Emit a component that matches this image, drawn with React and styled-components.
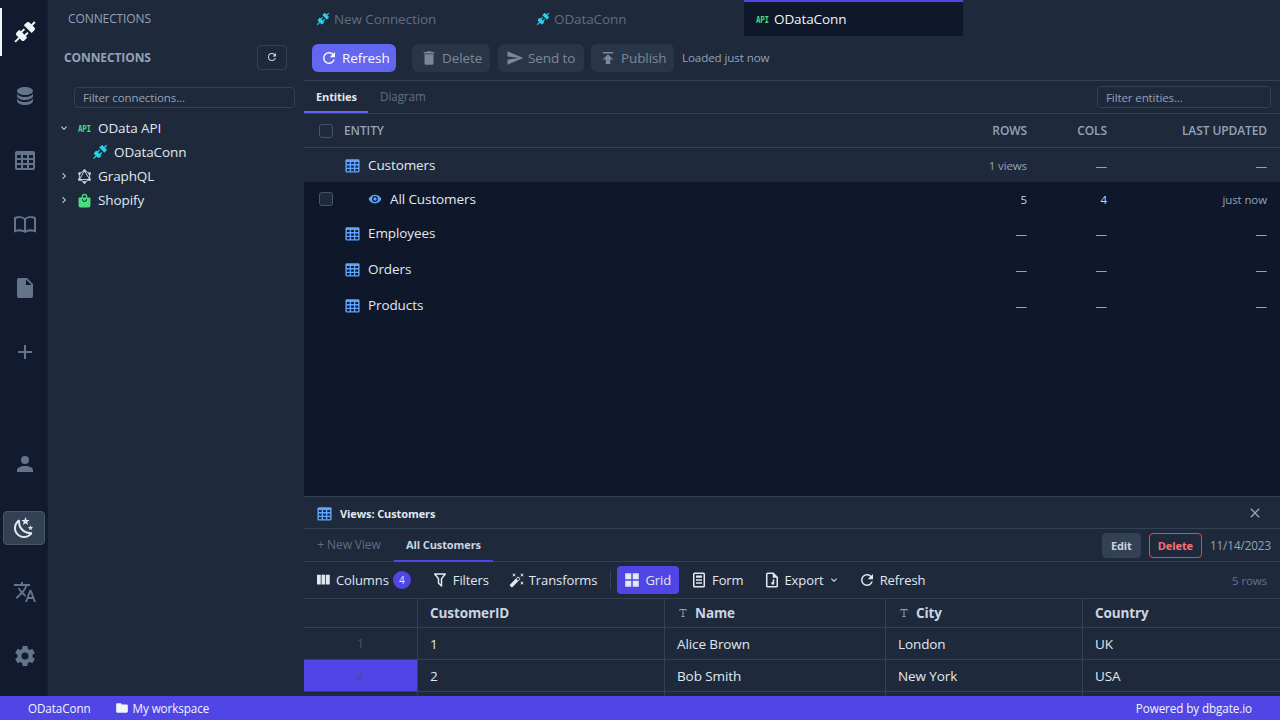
import React from "react";
import styled, { createGlobalStyle } from "styled-components";

const P = {
  plug: "M21.4 7.5C22.2 8.3 22.2 9.6 21.4 10.3L18.6 13.1L10.8 5.3L13.6 2.5C14.4 1.7 15.7 1.7 16.4 2.5L18.2 4.3L21.2 1.3L22.6 2.7L19.6 5.7L21.4 7.5M15.6 13.3L14.2 11.9L11.4 14.7L9.3 12.6L12.1 9.8L10.7 8.4L7.9 11.2L6.4 9.8L3.6 12.6C2.8 13.4 2.8 14.7 3.6 15.4L5.4 17.2L1.4 21.2L2.8 22.6L6.8 18.6L8.6 20.4C9.4 21.2 10.7 21.2 11.4 20.4L14.2 17.6L12.8 16.2L15.6 13.3Z",
  database: "M12,3C7.58,3 4,4.79 4,7C4,9.21 7.58,11 12,11C16.42,11 20,9.21 20,7C20,4.79 16.42,3 12,3M4,9V12C4,14.21 7.58,16 12,16C16.42,16 20,14.21 20,12V9C20,11.21 16.42,13 12,13C7.58,13 4,11.21 4,9M4,14V17C4,19.21 7.58,21 12,21C16.42,21 20,19.21 20,17V14C20,16.21 16.42,18 12,18C7.58,18 4,16.21 4,14Z",
  table: "M4,3H20A2,2 0 0,1 22,5V20A2,2 0 0,1 20,22H4A2,2 0 0,1 2,20V5A2,2 0 0,1 4,3M4,7V10H8V7H4M10,7V10H14V7H10M20,10V7H16V10H20M4,12V15H8V12H4M4,20H8V17H4V20M10,12V15H14V12H10M10,20H14V17H10V20M20,20V17H16V20H20M20,12H16V15H20V12Z",
  book: "M1,5.5C3,4.2 9,3.6 12,6C15,3.6 21,4.2 23,5.5V20.5C21,19.2 15,18.8 12,21C9,18.8 3,19.2 1,20.5V5.5M3,6.7V17.8C5.5,17 8.8,17 11,18.2V7.4C9,5.9 5.3,5.8 3,6.7M13,7.4V18.2C15.2,17 18.5,17 21,17.8V6.7C18.7,5.8 15,5.9 13,7.4Z",
  file: "M13,9V3.5L18.5,9M6,2C4.89,2 4,2.89 4,4V20A2,2 0 0,0 6,22H18A2,2 0 0,0 20,20V8L14,2H6Z",
  plus: "M19,13H13V19H11V13H5V11H11V5H13V11H19V13Z",
  account: "M12,4A4,4 0 0,1 16,8A4,4 0 0,1 12,12A4,4 0 0,1 8,8A4,4 0 0,1 12,4M12,14C16.42,14 20,15.79 20,18V20H4V18C4,15.79 7.58,14 12,14Z",
  night: "M17.75,4.09L15.22,6.03L16.13,9.09L13.5,7.28L10.87,9.09L11.78,6.03L9.25,4.09L12.44,4L13.5,1L14.56,4L17.75,4.09M21.25,11L19.61,12.25L20.2,14.23L18.5,13.06L16.8,14.23L17.39,12.25L15.75,11L17.81,10.95L18.5,9L19.19,10.95L21.25,11M18.97,15.95C19.8,15.87 20.69,17.05 20.16,17.8C19.84,18.25 19.5,18.67 19.08,19.07C15.17,23 8.84,23 4.94,19.07C1.03,15.17 1.03,8.83 4.94,4.93C5.34,4.53 5.76,4.17 6.21,3.85C6.96,3.32 8.14,4.21 8.06,5.04C7.79,7.9 8.75,10.87 10.95,13.06C13.14,15.26 16.1,16.22 18.97,15.95M17.33,17.97C14.5,17.81 11.7,16.64 9.53,14.5C7.36,12.31 6.2,9.5 6.04,6.68C3.23,9.82 3.34,14.64 6.35,17.66C9.37,20.67 14.19,20.78 17.33,17.97Z",
  translate: "M12.87,15.07L10.33,12.56L10.36,12.53C12.1,10.59 13.34,8.36 14.07,6H17V4H10V2H8V4H1V6H12.17C11.5,7.92 10.44,9.75 9,11.35C8.07,10.32 7.3,9.19 6.69,8H4.69C5.42,9.63 6.42,11.17 7.67,12.56L2.58,17.58L4,19L9,14L12.11,17.11L12.87,15.07M18.5,10H16.5L12,22H14L15.12,19H19.87L21,22H23L18.5,10M15.88,17L17.5,12.67L19.12,17H15.88Z",
  cog: "M12,15.5A3.5,3.5 0 0,1 8.5,12A3.5,3.5 0 0,1 12,8.5A3.5,3.5 0 0,1 15.5,12A3.5,3.5 0 0,1 12,15.5M19.43,12.97C19.47,12.65 19.5,12.33 19.5,12C19.5,11.67 19.47,11.34 19.43,11L21.54,9.37C21.73,9.22 21.78,8.95 21.66,8.73L19.66,5.27C19.54,5.05 19.27,4.96 19.05,5.05L16.56,6.05C16.04,5.66 15.5,5.32 14.87,5.07L14.5,2.42C14.46,2.18 14.25,2 14,2H10C9.75,2 9.54,2.18 9.5,2.42L9.13,5.07C8.5,5.32 7.96,5.66 7.44,6.05L4.95,5.05C4.73,4.96 4.46,5.05 4.34,5.27L2.34,8.73C2.21,8.95 2.27,9.22 2.46,9.37L4.57,11C4.53,11.34 4.5,11.67 4.5,12C4.5,12.33 4.53,12.65 4.57,12.97L2.46,14.63C2.27,14.78 2.21,15.05 2.34,15.27L4.34,18.73C4.46,18.95 4.73,19.03 4.95,18.95L7.44,17.94C7.96,18.34 8.5,18.68 9.13,18.93L9.5,21.58C9.54,21.82 9.75,22 10,22H14C14.25,22 14.46,21.82 14.5,21.58L14.87,18.93C15.5,18.67 16.04,18.34 16.56,17.94L19.05,18.95C19.27,19.03 19.54,18.95 19.66,18.73L21.66,15.27C21.78,15.05 21.73,14.78 21.54,14.63L19.43,12.97Z",
  refresh: "M17.65,6.35C16.2,4.9 14.21,4 12,4A8,8 0 0,0 4,12A8,8 0 0,0 12,20C15.73,20 18.84,17.45 19.73,14H17.65C16.83,16.33 14.61,18 12,18A6,6 0 0,1 6,12A6,6 0 0,1 12,6C13.66,6 15.14,6.69 16.22,7.78L13,11H20V4L17.65,6.35Z",
  trash: "M19,4H15.5L14.5,3H9.5L8.5,4H5V6H19M6,19A2,2 0 0,0 8,21H16A2,2 0 0,0 18,19V7H6V19Z",
  send: "M2,21L23,12L2,3V10L17,12L2,14V21Z",
  publish: "M5,4V6H19V4H5M5,14H9V20H15V14H19L12,7L5,14Z",
  down: "M7.41,8.58L12,13.17L16.59,8.58L18,10L12,16L6,10L7.41,8.58Z",
  right: "M8.59,16.58L13.17,12L8.59,7.41L10,6L16,12L10,18L8.59,16.58Z",
  eye: "M12,9A3,3 0 0,0 9,12A3,3 0 0,0 12,15A3,3 0 0,0 15,12A3,3 0 0,0 12,9M12,17A5,5 0 0,1 7,12A5,5 0 0,1 12,7A5,5 0 0,1 17,12A5,5 0 0,1 12,17M12,4.5C7,4.5 2.73,7.61 1,12C2.73,16.39 7,19.5 12,19.5C17,19.5 21.27,16.39 23,12C21.27,7.61 17,4.5 12,4.5Z",
  close: "M19,6.41L17.59,5L12,10.59L6.41,5L5,6.41L10.59,12L5,17.59L6.41,19L12,13.41L17.59,19L19,17.59L13.41,12L19,6.41Z",
  columns: "M16,5V18H21V5M4,18H9V5H4M10,18H15V5H10V18Z",
  filter: "M15,19.88C15.04,20.18 14.94,20.5 14.71,20.71C14.32,21.1 13.69,21.1 13.3,20.71L9.29,16.7C9.06,16.47 8.96,16.16 9,15.87V10.75L4.21,4.62C3.87,4.19 3.95,3.56 4.38,3.22C4.57,3.08 4.78,3 5,3V3H19V3C19.22,3 19.43,3.08 19.62,3.22C20.05,3.56 20.13,4.19 19.79,4.62L15,10.75V19.88M7.04,5L11,10.06V15.58L13,17.58V10.05L16.96,5H7.04Z",
  wand: "M7.5,5.6L5,7L6.4,4.5L5,2L7.5,3.4L10,2L8.6,4.5L10,7L7.5,5.6M19.5,15.4L22,14L20.6,16.5L22,19L19.5,17.6L17,19L18.4,16.5L17,14L19.5,15.4M22,2L20.6,4.5L22,7L19.5,5.6L17,7L18.4,4.5L17,2L19.5,3.4L22,2M13.34,12.78L15.78,10.34L13.66,8.22L11.22,10.66L13.34,12.78M14.37,7.29L16.71,9.63C17.1,10 17.1,10.65 16.71,11.04L5.04,22.71C4.65,23.1 4,23.1 3.63,22.71L1.29,20.37C0.9,20 0.9,19.35 1.29,18.96L12.96,7.29C13.35,6.9 14,6.9 14.37,7.29Z",
  grid: "M3,11H11V3H3M3,21H11V13H3M13,21H21V13H13M13,3V11H21V3",
  form: "M6,2H18A2,2 0 0,1 20,4V20A2,2 0 0,1 18,22H6A2,2 0 0,1 4,20V4A2,2 0 0,1 6,2M6,4V20H18V4H6M8,6H16V9H8V6M8,11H16V13H8V11M8,15H16V17H8V15Z",
  exportFile: "M6,2H14L20,8V20A2,2 0 0,1 18,22H6A2,2 0 0,1 4,20V4A2,2 0 0,1 6,2M6,4V20H18V9H13V4H6M15,11V16A2,2 0 1,1 13,14.3V11H15Z",
  bag: "M12,1A4.5,4.5 0 0,0 7.5,5.5V7H4A1.5,1.5 0 0,0 2.5,8.5V20A3,3 0 0,0 5.5,23H18.5A3,3 0 0,0 21.5,20V8.5A1.5,1.5 0 0,0 20,7H16.5V5.5A4.5,4.5 0 0,0 12,1M12,3A2.5,2.5 0 0,1 14.5,5.5V7H9.5V5.5A2.5,2.5 0 0,1 12,3M8,9.5H9.6V10.5C9.6,12 10.6,12.8 12,12.8C13.4,12.8 14.4,12 14.4,10.5V9.5H16V10.5C16,13 14,14.4 12,14.4C10,14.4 8,13 8,10.5V9.5Z",
  folder: "M10,4H4C2.89,4 2,4.89 2,6V18A2,2 0 0,0 4,20H20A2,2 0 0,0 22,18V8C22,6.89 21.1,6 20,6H12L10,4Z",
  typeT: "M5,4H19V8.5H17.6V6H13V18H15V20H9V18H11V6H6.4V8.5H5V4Z",
};

const GlobalStyle = createGlobalStyle`
  html, body {
    margin: 0;
    height: 100%;
    background: #0f172a;
    font-family: "Open Sans", "Liberation Sans", sans-serif;
  }
  * {
    box-sizing: border-box;
  }
`;

const Svg = styled.svg`
  display: block;
  flex: none;
  fill: ${(p) => p.$color || "currentColor"};
`;

const Icon = ({ d, size = 16, color }) => (
  <Svg viewBox="0 0 24 24" width={size} height={size} $color={color}>
    <path d={d} fillRule="evenodd" />
  </Svg>
);

const OutlineSvg = styled.svg`
  display: block;
  flex: none;
  fill: none;
  stroke: #cbd5e1;
  stroke-width: 1.5;
  stroke-linejoin: round;

  circle {
    fill: #cbd5e1;
    stroke: none;
  }
`;

const graphqlPoints = [
  [12, 2.5],
  [20.2, 7.2],
  [20.2, 16.8],
  [12, 21.5],
  [3.8, 16.8],
  [3.8, 7.2],
];

const GraphqlIcon = () => (
  <OutlineSvg viewBox="0 0 24 24" width={15} height={15}>
    <polygon points="12,2.5 20.2,7.2 20.2,16.8 12,21.5 3.8,16.8 3.8,7.2" />
    <polygon points="12,2.5 20.2,16.8 3.8,16.8" />
    {graphqlPoints.map(([cx, cy]) => (
      <circle key={`${cx}-${cy}`} cx={cx} cy={cy} r="2.2" />
    ))}
  </OutlineSvg>
);

const Page = styled.div`
  width: 1280px;
  height: 720px;
  display: flex;
  flex-direction: column;
  overflow: hidden;
  color: #e2e8f0;
  font-size: 13px;
  letter-spacing: -0.1px;
`;

const Workspace = styled.div`
  flex: 1;
  min-height: 0;
  display: flex;
`;

const IconBar = styled.nav`
  width: 48px;
  flex: none;
  display: flex;
  flex-direction: column;
  padding-bottom: 8px;
  background: #111a2e;
  color: #64748b;
  box-shadow: inset -3px 0 3px -2px #162033;
`;

const BarItem = styled.div`
  position: relative;
  width: 48px;
  height: 64px;
  flex: none;
  display: flex;
  align-items: center;
  justify-content: center;
  padding-left: 2px;
  color: ${(p) => (p.$active ? "#f1f5f9" : "#64748b")};

  &::before {
    content: "";
    display: ${(p) => (p.$active ? "block" : "none")};
    position: absolute;
    left: 0;
    top: 8px;
    width: 2px;
    height: 48px;
    background: #f1f5f9;
  }
`;

const ThemeSlot = styled(BarItem)`
  padding-left: 0;
`;

const ThemeButton = styled.div`
  width: 42px;
  height: 34px;
  display: flex;
  align-items: center;
  justify-content: center;
  border-radius: 4px;
  background: #334155;
  border: 1px solid #475569;
  color: #e2e8f0;
`;

const BarSpacer = styled.div`
  flex: 1;
`;

const Sidebar = styled.aside`
  width: 256px;
  flex: none;
  background: #1e293b;
  display: flex;
  flex-direction: column;
`;

const SideCaption = styled.div`
  height: 36px;
  padding: 0 20px;
  display: flex;
  align-items: center;
  font-size: 12px;
  color: #94a3b8;
`;

const SideHead = styled.div`
  height: 44px;
  padding: 0 17px 2px 16px;
  display: flex;
  align-items: center;
  justify-content: space-between;
  font-size: 12px;
  font-weight: 700;
  color: #94a3b8;
`;

const SquareButton = styled.div`
  width: 30px;
  height: 25px;
  border: 1px solid #334155;
  border-radius: 4px;
  display: flex;
  align-items: center;
  justify-content: center;
  color: #cbd5e1;
`;

const FilterInput = styled.div`
  height: ${(p) => p.$height}px;
  width: ${(p) => p.$width}px;
  border: 1px solid #334155;
  border-radius: 4px;
  display: flex;
  align-items: center;
  padding: 0 8px;
  font-size: 11.5px;
  color: #94a3b8;
  background: #1e293b;
`;

const SideFilter = styled.div`
  padding: 7px 9px 8px 26px;
`;

const TreeRow = styled.div`
  height: 24px;
  display: flex;
  align-items: center;
  padding-left: ${(p) => p.$indent}px;
  gap: ${(p) => p.$gap || 0}px;
  font-size: 13.5px;
  color: #e2e8f0;
`;

const Chevron = styled.span`
  width: 20px;
  display: flex;
  justify-content: flex-start;
  color: #cbd5e1;
`;

const ApiMark = styled.span`
  width: 13px;
  flex: none;
  margin-right: ${(p) => p.$mr || 0}px;
  display: inline-block;
  font-family: "DejaVu Sans Mono", "Liberation Mono", monospace;
  font-size: 7.5px;
  font-weight: 700;
  letter-spacing: -0.3px;
  transform: scaleY(1.3);
  color: #4ade80;
`;

const TreeIcon = styled.span`
  width: 13px;
  margin-right: 7px;
  flex: none;
  display: flex;
  justify-content: center;
`;

const Main = styled.main`
  flex: 1;
  min-width: 0;
  display: flex;
  flex-direction: column;
`;

const TabBar = styled.div`
  height: 36px;
  flex: none;
  display: flex;
  background: #1e293b;
`;

const DocTab = styled.div`
  width: ${(p) => p.$width}px;
  display: flex;
  align-items: center;
  gap: 4px;
  padding-left: 12px;
  font-size: 13.5px;
  color: ${(p) => (p.$active ? "#f1f5f9" : "#5f6e84")};
  background: ${(p) => (p.$active ? "#0f172a" : "transparent")};
  border-top: 2px solid ${(p) => (p.$active ? "#4f46e5" : "transparent")};
`;

const Toolbar = styled.div`
  height: 45px;
  flex: none;
  display: flex;
  align-items: center;
  padding: 0 8px 1px;
  background: #1e293b;
  border-bottom: 1px solid #334155;
`;

const ActionButton = styled.div`
  height: 28px;
  margin-right: ${(p) => p.$mr || 0}px;
  width: ${(p) => p.$width}px;
  padding-left: 8px;
  display: flex;
  align-items: center;
  gap: 4px;
  border-radius: 6px;
  font-size: 13.5px;
  background: ${(p) => (p.$primary ? "#6366f1" : "#2a3648")};
  color: ${(p) => (p.$primary ? "#f8fafc" : "#7a889c")};
`;

const Loaded = styled.span`
  margin-left: 8px;
  font-size: 11.6px;
  color: #94a3b8;
`;

const SubTabs = styled.div`
  height: 33px;
  flex: none;
  display: flex;
  align-items: stretch;
  background: #1e293b;
  border-bottom: 1px solid #334155;
  padding-right: 9px;
`;

const SubTab = styled.div`
  padding: 0 12px;
  width: ${(p) => p.$width}px;
  display: flex;
  align-items: center;
  font-size: ${(p) => (p.$active ? 11 : 11.7)}px;
  font-weight: ${(p) => (p.$active ? 700 : 400)};
  color: ${(p) => (p.$active ? "#e2e8f0" : "#5f6e84")};
  border-bottom: 2px solid ${(p) => (p.$active ? "#6366f1" : "transparent")};
`;

const SubTabFill = styled.div`
  flex: 1;
`;

const SubTabSide = styled.div`
  display: flex;
  align-items: center;
`;

const EntityPane = styled.section`
  flex: 1;
  min-height: 0;
  background: #0f172a;
`;

const EntityRow = styled.div`
  height: ${(p) => p.$height}px;
  display: grid;
  grid-template-columns: 40px 1fr 80px 80px 160px;
  padding-right: 13px;
  align-items: center;
  background: ${(p) => (p.$raised ? "#1e293b" : "transparent")};
  border-bottom: ${(p) => (p.$line ? "1px solid #334155" : "none")};
  font-size: 13.5px;
  color: #e2e8f0;
`;

const HeadCell = styled.div`
  font-size: 12px;
  font-weight: 600;
  color: #94a3b8;
  text-align: ${(p) => (p.$left ? "left" : "right")};
`;

const NumCell = styled.div`
  font-size: 11.5px;
  text-align: right;
  color: ${(p) => p.$color || "#94a3b8"};
`;

const CheckCell = styled.div`
  padding-left: 15px;
`;

const Check = styled.div`
  width: 14px;
  height: 14px;
  border: 1px solid #475569;
  border-radius: 3px;
  background: #1e293b;
`;

const NameCell = styled.div`
  display: flex;
  align-items: center;
  gap: ${(p) => p.$gap || 7}px;
  padding-left: ${(p) => p.$indent || 0}px;
`;

const ViewsPane = styled.section`
  height: 200px;
  flex: none;
  background: #1e293b;
  border-top: 1px solid #334155;
  display: flex;
  flex-direction: column;
`;

const ViewsHead = styled.div`
  height: 32px;
  flex: none;
  display: flex;
  align-items: center;
  gap: 7px;
  padding: 1px 17px 0 12px;
  border-bottom: 1px solid #334155;
  font-size: 11px;
  font-weight: 700;
  color: #e2e8f0;
`;

const Close = styled.span`
  margin-left: auto;
  color: #94a3b8;
`;

const ViewTabs = styled.div`
  height: 33px;
  flex: none;
  display: flex;
  align-items: stretch;
  padding: 0 9px 0 0;
  border-bottom: 1px solid #334155;
`;

const ViewTab = styled.div`
  display: flex;
  align-items: center;
  justify-content: center;
  width: ${(p) => p.$width}px;
  font-size: ${(p) => (p.$active ? 11 : 12)}px;
  font-weight: ${(p) => (p.$active ? 700 : 400)};
  color: ${(p) => (p.$active ? "#cbd5e1" : "#5f6e84")};
  border-bottom: 2px solid ${(p) => (p.$active ? "#4f46e5" : "transparent")};
  margin-bottom: -1px;
`;

const ViewActions = styled.div`
  margin-left: auto;
  display: flex;
  align-items: center;
  gap: 8px;
  font-size: 11.7px;
  color: #94a3b8;
`;

const SmallButton = styled.div`
  height: 25px;
  padding: 0 8px;
  display: flex;
  align-items: center;
  border-radius: 4px;
  font-size: 11px;
  font-weight: 700;
  color: ${(p) => (p.$danger ? "#f87171" : "#cbd5e1")};
  background: ${(p) => (p.$danger ? "transparent" : "#334155")};
  border: 1px solid ${(p) => (p.$danger ? "#ef4444" : "#334155")};
`;

const GridTools = styled.div`
  height: 37px;
  flex: none;
  display: flex;
  align-items: center;
  padding: 0 13px 0 4px;
  border-bottom: 1px solid #334155;
  font-size: 13px;
  color: #e2e8f0;
`;

const Tool = styled.div`
  height: 28px;
  display: flex;
  align-items: center;
  gap: 4px;
  padding: 0 8px 0 6px;
  margin-right: ${(p) => p.$mr || 0}px;
  border-radius: 4px;
  color: #e2e8f0;
  background: ${(p) => (p.$active ? "#4f46e5" : "transparent")};
`;

const Badge = styled.span`
  width: 18px;
  height: 18px;
  border-radius: 50%;
  background: #4f46e5;
  display: flex;
  align-items: center;
  justify-content: center;
  font-size: 10px;
  color: #e2e8f0;
`;

const ToolDivider = styled.div`
  width: 1px;
  height: 20px;
  background: #334155;
  margin-right: 6px;
`;

const RowCount = styled.span`
  margin-left: auto;
  font-size: 11.5px;
  color: #64748b;
`;

const DataGrid = styled.div`
  flex: 1;
  min-height: 0;
  overflow: hidden;
`;

const GridRow = styled.div`
  height: ${(p) => p.$height}px;
  display: grid;
  grid-template-columns: 114px 247px 221px 197px 197px;
  border-bottom: 1px solid #334155;
`;

const GridHead = styled.div`
  display: flex;
  align-items: center;
  gap: 6px;
  padding-left: 12px;
  border-right: 1px solid #334155;
  font-size: 13.5px;
  font-weight: 700;
  color: #cbd5e1;

  &:last-child {
    border-right: none;
  }
`;

const GridCell = styled.div`
  display: flex;
  align-items: center;
  padding-left: 12px;
  border-right: 1px solid #334155;
  font-size: 13.5px;
  color: #e2e8f0;

  &:last-child {
    border-right: none;
  }
`;

const RowNum = styled.div`
  display: flex;
  align-items: center;
  justify-content: center;
  border-right: 1px solid #334155;
  font-size: 12px;
  color: #475569;
  background: ${(p) => (p.$selected ? "#4f46e5" : "transparent")};
`;

const TypeMark = styled.span`
  color: #94a3b8;
`;

const StatusBar = styled.footer`
  height: 24px;
  flex: none;
  display: flex;
  align-items: center;
  padding: 0 28px;
  background: #4f46e5;
  font-size: 11.7px;
  white-space: nowrap;
  color: #f1f5f9;
`;

const StatusItem = styled.span`
  display: flex;
  align-items: center;
  gap: 4px;
  margin-left: ${(p) => p.$ml || 0}px;
`;

const StatusFill = styled.div`
  flex: 1;
`;

const customers = [
  { id: "1", name: "Alice Brown", city: "London", country: "UK" },
  { id: "2", name: "Bob Smith", city: "New York", country: "USA" },
];

const entities = [
  { name: "Employees", height: 34 },
  { name: "Orders", height: 38 },
  { name: "Products", height: 34 },
];

const TableIcon = () => <Icon d={P.table} size={17} color="#60a5fa" />;

const App = () => (
  <Page>
    <GlobalStyle />
    <Workspace>
      <IconBar>
        <BarItem $active><Icon d={P.plug} size={24} /></BarItem>
        <BarItem><Icon d={P.database} size={24} /></BarItem>
        <BarItem><Icon d={P.table} size={24} /></BarItem>
        <BarItem><Icon d={P.book} size={24} /></BarItem>
        <BarItem><Icon d={P.file} size={24} /></BarItem>
        <BarItem><Icon d={P.plus} size={24} /></BarItem>
        <BarSpacer />
        <BarItem><Icon d={P.account} size={24} /></BarItem>
        <ThemeSlot><ThemeButton><Icon d={P.night} size={24} /></ThemeButton></ThemeSlot>
        <BarItem><Icon d={P.translate} size={24} /></BarItem>
        <BarItem><Icon d={P.cog} size={24} /></BarItem>
      </IconBar>

      <Sidebar>
        <SideCaption>CONNECTIONS</SideCaption>
        <SideHead>
          CONNECTIONS
          <SquareButton><Icon d={P.refresh} size={12} /></SquareButton>
        </SideHead>
        <SideFilter>
          <FilterInput $height={21} $width={221}>Filter connections...</FilterInput>
        </SideFilter>
        <TreeRow $indent={10}>
          <Chevron><Icon d={P.down} size={12} /></Chevron>
          <ApiMark $mr={7}>API</ApiMark>
          OData API
        </TreeRow>
        <TreeRow $indent={44} $gap={6}>
          <Icon d={P.plug} size={16} color="#22d3ee" />
          ODataConn
        </TreeRow>
        <TreeRow $indent={10}>
          <Chevron><Icon d={P.right} size={12} /></Chevron>
          <TreeIcon><GraphqlIcon /></TreeIcon>
          GraphQL
        </TreeRow>
        <TreeRow $indent={10}>
          <Chevron><Icon d={P.right} size={12} /></Chevron>
          <TreeIcon><Icon d={P.bag} size={15} color="#4ade80" /></TreeIcon>
          Shopify
        </TreeRow>
      </Sidebar>

      <Main>
        <TabBar>
          <DocTab $width={220}><Icon d={P.plug} size={14} color="#22d3ee" />New Connection</DocTab>
          <DocTab $width={220}><Icon d={P.plug} size={14} color="#22d3ee" />ODataConn</DocTab>
          <DocTab $width={219} $active><ApiMark $mr={1}>API</ApiMark>ODataConn</DocTab>
        </TabBar>
        <Toolbar>
          <ActionButton $primary $width={84} $mr={16}><Icon d={P.refresh} size={18} />Refresh</ActionButton>
          <ActionButton $width={78} $mr={8}><Icon d={P.trash} size={18} />Delete</ActionButton>
          <ActionButton $width={86} $mr={7}><Icon d={P.send} size={18} />Send to</ActionButton>
          <ActionButton $width={83}><Icon d={P.publish} size={18} />Publish</ActionButton>
          <Loaded>Loaded just now</Loaded>
        </Toolbar>
        <SubTabs>
          <SubTab $active $width={64}>Entities</SubTab>
          <SubTab>Diagram</SubTab>
          <SubTabFill />
          <SubTabSide>
            <FilterInput $height={22} $width={174}>Filter entities...</FilterInput>
          </SubTabSide>
        </SubTabs>

        <EntityPane>
          <EntityRow $height={34} $raised $line>
            <CheckCell><Check /></CheckCell>
            <HeadCell $left>ENTITY</HeadCell>
            <HeadCell>ROWS</HeadCell>
            <HeadCell>COLS</HeadCell>
            <HeadCell>LAST UPDATED</HeadCell>
          </EntityRow>
          <EntityRow $height={34} $raised>
            <div />
            <NameCell><TableIcon />Customers</NameCell>
            <NumCell>1 views</NumCell>
            <NumCell>—</NumCell>
            <NumCell>—</NumCell>
          </EntityRow>
          <EntityRow $height={34}>
            <CheckCell><Check /></CheckCell>
            <NameCell $indent={24} $gap={8}>
              <Icon d={P.eye} size={14} color="#60a5fa" />
              All Customers
            </NameCell>
            <NumCell $color="#cbd5e1">5</NumCell>
            <NumCell $color="#cbd5e1">4</NumCell>
            <NumCell>just now</NumCell>
          </EntityRow>
          {entities.map((row) => (
            <EntityRow key={row.name} $height={row.height}>
              <div />
              <NameCell><TableIcon />{row.name}</NameCell>
              <NumCell>—</NumCell>
              <NumCell>—</NumCell>
              <NumCell>—</NumCell>
            </EntityRow>
          ))}
        </EntityPane>

        <ViewsPane>
          <ViewsHead>
            <TableIcon />
            Views: Customers
            <Close><Icon d={P.close} size={16} /></Close>
          </ViewsHead>
          <ViewTabs>
            <ViewTab $width={90}>+ New View</ViewTab>
            <ViewTab $width={99} $active>All Customers</ViewTab>
            <ViewActions>
              <SmallButton>Edit</SmallButton>
              <SmallButton $danger>Delete</SmallButton>
              11/14/2023
            </ViewActions>
          </ViewTabs>
          <GridTools>
            <Tool $mr={6}><Icon d={P.columns} size={18} />Columns<Badge>4</Badge></Tool>
            <Tool $mr={6}><Icon d={P.filter} size={18} />Filters</Tool>
            <Tool $mr={5}><Icon d={P.wand} size={16} />Transforms</Tool>
            <ToolDivider />
            <Tool $active $mr={5}><Icon d={P.grid} size={18} />Grid</Tool>
            <Tool $mr={5}><Icon d={P.form} size={18} />Form</Tool>
            <Tool $mr={4}>
              <Icon d={P.exportFile} size={18} />Export
              <Icon d={P.down} size={12} />
            </Tool>
            <Tool><Icon d={P.refresh} size={18} />Refresh</Tool>
            <RowCount>5 rows</RowCount>
          </GridTools>
          <DataGrid>
            <GridRow $height={29}>
              <GridHead />
              <GridHead>CustomerID</GridHead>
              <GridHead><TypeMark><Icon d={P.typeT} size={12} /></TypeMark>Name</GridHead>
              <GridHead><TypeMark><Icon d={P.typeT} size={12} /></TypeMark>City</GridHead>
              <GridHead>Country</GridHead>
            </GridRow>
            {customers.map((row) => (
              <GridRow key={row.id} $height={32}>
                <RowNum $selected={row.id === "2"}>{row.id}</RowNum>
                <GridCell>{row.id}</GridCell>
                <GridCell>{row.name}</GridCell>
                <GridCell>{row.city}</GridCell>
                <GridCell>{row.country}</GridCell>
              </GridRow>
            ))}
            <GridRow $height={32}>
              <RowNum />
              <GridCell />
              <GridCell />
              <GridCell />
              <GridCell />
            </GridRow>
          </DataGrid>
        </ViewsPane>
      </Main>
    </Workspace>
    <StatusBar>
      <StatusItem>ODataConn</StatusItem>
      <StatusItem $ml={24}><Icon d={P.folder} size={14} />My workspace</StatusItem>
      <StatusFill />
      <StatusItem>Powered by dbgate.io</StatusItem>
    </StatusBar>
  </Page>
);

export default App;
